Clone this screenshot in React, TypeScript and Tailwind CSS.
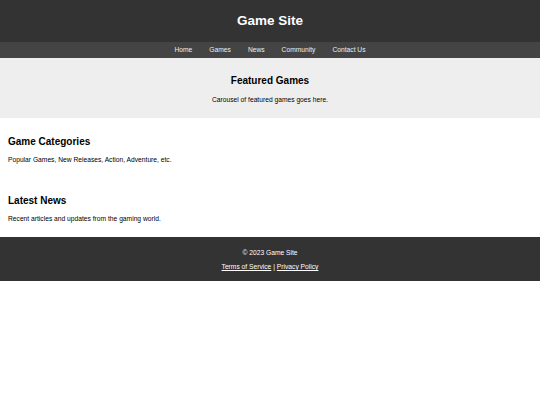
export default function App() {
  const links = ['Home', 'Games', 'News', 'Community', 'Contact Us']

  return (
    <div className="w-full bg-white font-['Liberation_Sans',Arial,sans-serif] text-black">
      <header className="h-[42px] bg-[#333] flex items-center justify-center">
        <h1 className="text-[13.5px] font-bold text-white leading-none">Game Site</h1>
      </header>

      <nav className="h-[16px] bg-[#444] flex items-center justify-center gap-[17px]">
        {links.map((l) => (
          <a key={l} href="#" className="text-[6.7px] leading-none text-[#eee]">
            {l}
          </a>
        ))}
      </nav>

      <section className="h-[60px] bg-[#eee] pt-[17px] text-center">
        <h2 className="text-[10px] font-bold leading-[12px]">Featured Games</h2>
        <p className="text-[6.7px] leading-[8px] mt-[9px]">Carousel of featured games goes here.</p>
      </section>

      <section className="px-[8px] pt-[18px]">
        <h2 className="text-[10px] font-bold leading-[12px]">Game Categories</h2>
        <p className="text-[6.7px] leading-[8px] mt-[8px]">Popular Games, New Releases, Action, Adventure, etc.</p>
      </section>

      <section className="px-[8px] pt-[31px] pb-[14px]">
        <h2 className="text-[10px] font-bold leading-[12px]">Latest News</h2>
        <p className="text-[6.7px] leading-[8px] mt-[8px]">Recent articles and updates from the gaming world.</p>
      </section>

      <footer className="h-[44px] bg-[#333] pt-[12px] text-center text-white text-[6.7px] leading-[8px]">
        <p>© 2023 Game Site</p>
        <p className="mt-[6px]">
          <a href="#" className="underline">Terms of Service</a> | <a href="#" className="underline">Privacy Policy</a>
        </p>
      </footer>
    </div>
  )
}
